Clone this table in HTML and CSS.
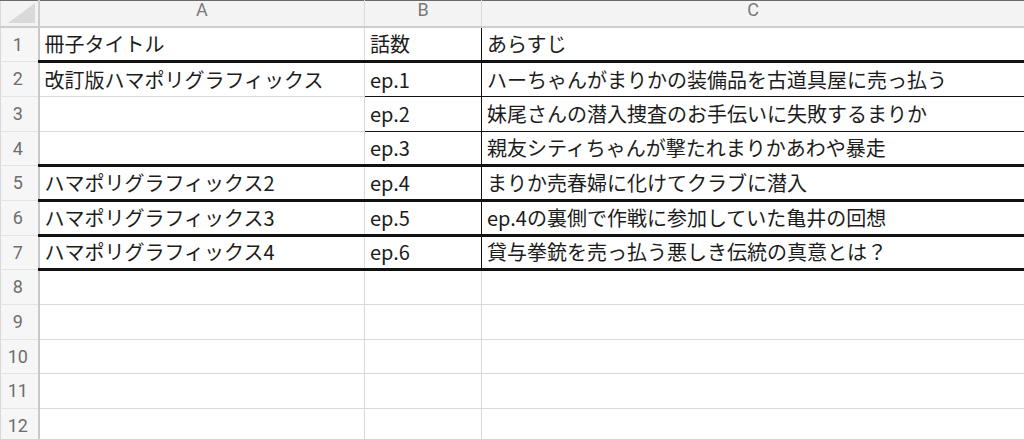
FILE: index.html
```html
<!DOCTYPE html>
<html lang="ja">
<head>
<meta charset="utf-8">
<link rel="stylesheet" href="styles.css">
</head>
<body>
<table class="sheet">
  <colgroup>
    <col class="c-rh"><col class="c-a"><col class="c-b"><col class="c-c">
  </colgroup>
  <thead>
    <tr class="hdr">
      <th class="corner"><svg class="tri" width="27" height="20" viewBox="0 0 27 20"><polygon points="27,0 27,20 0,20" fill="#d9d9d9"/></svg></th>
      <th class="colh">A</th>
      <th class="colh">B</th>
      <th class="colh">C</th>
    </tr>
  </thead>
  <tbody>
    <tr><td class="rh">1</td><td class="bk">冊子タイトル</td><td class="bk ld">話数</td><td class="bk ld">あらすじ</td></tr>
    <tr><td class="rh">2</td><td>改訂版ハマポリグラフィックス</td><td class="ld bd">ep.1</td><td class="ld bd">ハーちゃんがまりかの装備品を古道具屋に売っ払う</td></tr>
    <tr><td class="rh">3</td><td></td><td class="ld bd">ep.2</td><td class="ld bd">妹尾さんの潜入捜査のお手伝いに失敗するまりか</td></tr>
    <tr><td class="rh">4</td><td class="bk"></td><td class="bk ld">ep.3</td><td class="bk ld">親友シティちゃんが撃たれまりかあわや暴走</td></tr>
    <tr><td class="rh">5</td><td class="bk">ハマポリグラフィックス2</td><td class="bk ld">ep.4</td><td class="bk ld">まりか売春婦に化けてクラブに潜入</td></tr>
    <tr><td class="rh">6</td><td class="bk">ハマポリグラフィックス3</td><td class="bk ld">ep.5</td><td class="bk ld">ep.4の裏側で作戦に参加していた亀井の回想</td></tr>
    <tr><td class="rh">7</td><td class="bk">ハマポリグラフィックス4</td><td class="bk ld">ep.6</td><td class="bk ld">貸与拳銃を売っ払う悪しき伝統の真意とは？</td></tr>
    <tr><td class="rh">8</td><td></td><td></td><td></td></tr>
    <tr><td class="rh">9</td><td></td><td></td><td></td></tr>
    <tr><td class="rh">10</td><td></td><td></td><td></td></tr>
    <tr><td class="rh">11</td><td></td><td></td><td></td></tr>
    <tr><td class="rh">12</td><td></td><td></td><td></td></tr>
  </tbody>
</table>
</body>
</html>
```

FILE: styles.css
```css
html, body {
  margin: 0;
  padding: 0;
  background: #ffffff;
  overflow: hidden;
}

.sheet {
  border-collapse: collapse;
  table-layout: fixed;
  width: 1024px;
  font-family: "Noto Sans CJK JP", "Noto Sans", sans-serif;
  font-size: 20px;
  color: #1c1c1c;
}

.c-rh { width: 38px; }
.c-a { width: 326px; }
.c-b { width: 117px; }
.c-c { width: 543px; }

.hdr th {
  height: 25px;
  padding: 0;
  background: #f3f3f3;
  border-top: 1px solid #6a6a6a;
  border-bottom: 2px solid #cdcdcd;
  border-left: 1px solid #dadada;
  border-right: 1px solid #dadada;
  vertical-align: top;
}

.colh {
  font-family: Roboto, "Noto Sans", sans-serif;
  font-weight: 400;
  font-size: 18px;
  line-height: 18px;
  color: #7a7a7a;
  text-align: center;
}

.corner .tri {
  display: block;
  margin: 2px 3px 0 auto;
}

.hdr .corner {
  border-right: 2px solid #cdcdcd;
}

tbody tr {
  height: 34.7px;
}

td {
  padding: 0 5px;
  border: 1px solid #d9d9d9;
  white-space: nowrap;
  overflow: hidden;
  vertical-align: middle;
  line-height: 1.2;
}

td.rh {
  padding: 0 3px 0 0;
  background: #f6f6f6;
  border-right: 2px solid #c9c9c9;
  border-top: 1px solid #e4e4e4;
  border-bottom: 1px solid #e4e4e4;
  color: #6e6e6e;
  font-family: Roboto, "Noto Sans", sans-serif;
  font-size: 18px;
  text-align: center;
}

td.ld {
  border-left: 1px solid #111111;
  border-right: 1px solid #111111;
}

td.bd {
  border-bottom: 1px solid #111111;
}

td.bk {
  border-bottom: 3px solid #111111;
}
```
